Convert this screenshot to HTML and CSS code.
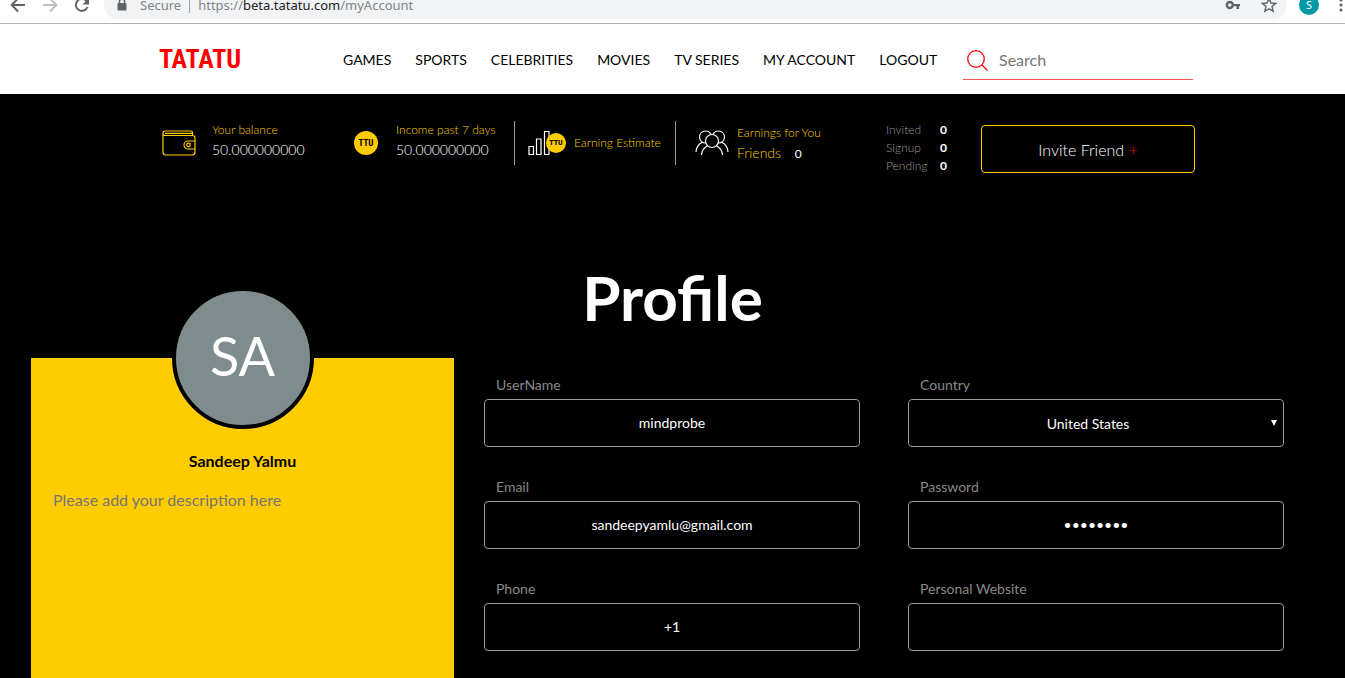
FILE: index.html
```html
<!DOCTYPE html>
<html lang="en">
<head>
<meta charset="utf-8">
<meta name="viewport" content="width=device-width, initial-scale=1">
<title>Profile</title>
<link rel="stylesheet" href="styles.css">
</head>
<body>
<div class="browser">
  <button class="tool" aria-label="Back"><svg width="16" height="16" viewBox="0 0 16 16"><path d="M15 8H2M8 1.500L1.700 8L8 14.500" fill="none" stroke="#5f6368" stroke-width="2"/></svg></button>
  <button class="tool" aria-label="Forward"><svg width="16" height="16" viewBox="0 0 16 16"><path d="M1 8H14M8 1.500L14.300 8L8 14.500" fill="none" stroke="#bdbdbd" stroke-width="2"/></svg></button>
  <button class="tool" aria-label="Reload"><svg width="16" height="16" viewBox="0 0 16 16"><path d="M13.500 10A6 6 0 1 1 12.500 4" fill="none" stroke="#5f6368" stroke-width="2"/><path d="M15 1V7.500H8.500Z" fill="#5f6368"/></svg></button>
  <div class="omnibox">
    <svg width="12" height="14" viewBox="0 0 12 14"><rect x="1.500" y="5" width="9" height="7.500" rx="1" fill="#5f6368"/><path d="M3.500 5V3.500a2.500 2.500 0 0 1 5 0V5" fill="none" stroke="#5f6368" stroke-width="1.500"/></svg>
    <span class="secure">Secure</span>
    <span class="divider"></span>
    <span class="url">https://<b>beta.tatatu.com</b>/myAccount</span>
    <svg class="key" width="16" height="10" viewBox="0 0 16 10"><circle cx="4.800" cy="5" r="3" fill="none" stroke="#5f6368" stroke-width="2.400"/><path d="M8 4H15V6.200H14V9H11.500V6.200H8Z" fill="#5f6368"/></svg>
    <svg width="16" height="16" viewBox="0 0 16 16"><path d="M8 1.500L9.900 6L14.700 6.400L11 9.500L12.200 14.200L8 11.700L3.800 14.200L5 9.500L1.300 6.400L6.100 6Z" fill="none" stroke="#5f6368" stroke-width="1.400"/></svg>
  </div>
  <span class="user">S</span>
  <button class="more" aria-label="Menu"><svg width="4" height="16" viewBox="0 0 4 16" fill="#5f6368"><circle cx="2" cy="3" r="1.600"/><circle cx="2" cy="8" r="1.600"/><circle cx="2" cy="13" r="1.600"/></svg></button>
</div>

<header class="header">
  <a class="logo" href="#">TATATU</a>
  <nav class="nav">
    <a href="#">GAMES</a><a href="#">SPORTS</a><a href="#">CELEBRITIES</a><a href="#">MOVIES</a><a href="#">TV SERIES</a><a href="#">MY ACCOUNT</a><a href="#">LOGOUT</a>
  </nav>
  <label class="search">
    <svg width="22" height="22" viewBox="0 0 22 22" fill="none" stroke="#f00" stroke-width="1.300"><circle cx="9" cy="10" r="8.300"/><path d="M15 16L20.500 21.500"/></svg>
    <input type="search" placeholder="Search" aria-label="Search">
  </label>
</header>

<main class="main">
  <section class="stats">
    <div class="stat balance">
      <svg width="34" height="26" viewBox="0 0 34 26" fill="none" stroke="#fc0" stroke-width="1.200"><path d="M30.500 5.500V3Q30.500 1 28.500 1H3Q1 1 1 3V22Q1 25 4 25H30Q33 25 33 22V8Q33 5.500 30.500 5.500H3Q1 5.500 1 3.500M3 3.300H30.500M33 11H26a4 4 0 0 0 0 8H33"/><circle cx="26.500" cy="15" r="1.800"/></svg>
      <div class="pair"><p class="cap">Your balance</p><p class="amount">50.000000000</p></div>
    </div>
    <div class="stat income">
      <span class="coin">TTU</span>
      <div class="pair"><p class="cap">Income past 7 days</p><p class="amount">50.000000000</p></div>
    </div>
    <div class="stat estimate">
      <span class="chart">
        <svg width="24" height="26" viewBox="0 0 24 26" fill="none" stroke="#fff" stroke-width="1.200"><path d="M1 16.500H5.500V24.500H1ZM8.500 9H13V24.500H8.500ZM16.500 1.500H21V24.500H16.500Z"/></svg>
        <span class="coin small">TTU</span>
      </span>
      <p class="cap">Earning Estimate</p>
    </div>
    <div class="stat friends">
      <svg width="34" height="26" viewBox="0 0 34 26" fill="none" stroke="#fff" stroke-width="1.200"><circle cx="17" cy="11" r="6.500"/><path d="M10.500 13A6 6 0 1 1 16 4.500M23.500 13A6 6 0 1 0 18 4.500M1 22Q1.500 15 7 12.500M33 22Q32.500 15 27 12.500M6.500 25Q7 18.500 12.500 16M27.500 25Q27 18.500 21.500 16"/></svg>
      <div><p class="cap">Earnings for You</p><p class="friend-line">Friends <span>0</span></p></div>
    </div>
    <dl class="counts">
      <dt>Invited</dt><dd>0</dd><dt>Signup</dt><dd>0</dd><dt>Pending</dt><dd>0</dd>
    </dl>
    <button class="invite">Invite Friend <span>+</span></button>
  </section>

  <h1 class="title">Profile</h1>

  <div class="profile">
    <aside class="card">
      <div class="avatar">SA</div>
      <h2 class="name">Sandeep Yalmu</h2>
      <textarea class="about" aria-label="Description" placeholder="Please add your description here"></textarea>
    </aside>
    <form class="fields">
      <div class="field"><label for="username">UserName</label><input id="username" type="text" value="mindprobe"></div>
      <div class="field"><label for="country">Country</label>
        <div class="select"><select id="country"><option>United States</option></select><svg width="8" height="8" viewBox="0 0 8 8"><path d="M1 1H7L4 7Z" fill="#fff"/></svg></div>
      </div>
      <div class="field"><label for="email">Email</label><input id="email" type="email" value="sandeepyamlu@gmail.com"></div>
      <div class="field"><label for="password">Password</label><input id="password" type="password" value="abcdefgh"></div>
      <div class="field"><label for="phone">Phone</label><input id="phone" type="tel" value="+1"></div>
      <div class="field"><label for="website">Personal Website</label><input id="website" type="url"></div>
    </form>
  </div>
</main>
</body>
</html>
```

FILE: styles.css
```css
* { box-sizing: border-box; }
body, h1, h2, p, dl, dd { margin: 0; }
body {
  min-height: 100vh;
  display: flex;
  flex-direction: column;
  background: #000;
  font-family: Lato, "Liberation Sans", sans-serif;
}
button, input, select, textarea { font: inherit; }
button { padding: 0; border: 0; background: none; }
a { color: inherit; text-decoration: none; }

/* Browser toolbar */
.browser {
  height: 24px;
  display: flex;
  align-items: flex-end;
  gap: 16px;
  padding: 0 2px 4px 10px;
  overflow: hidden;
  background: #fff;
  border-bottom: 1px solid #b4b4b4;
  font: 13px/10px "Noto Sans", sans-serif;
  color: #80868b;
}
.tool, .more { height: 28px; flex: none; display: flex; align-items: center; }
.omnibox {
  flex: 1;
  height: 28px;
  display: flex;
  align-items: center;
  padding: 0 10px 0 12px;
  margin-left: -2px;
  border-radius: 14px;
  background: #f1f3f4;
  white-space: nowrap;
}
.secure { margin-left: 12px; }
.divider { width: 1px; height: 16px; margin: 0 8px; background: #9aa0a6; }
.url { flex: 1; }
.url b { font-weight: 400; color: #202124; }
.key { margin-right: 20px; }
.user {
  width: 20px; height: 20px;
  flex: none;
  display: flex;
  align-items: center;
  justify-content: center;
  margin: 0 4px 4px -4px;
  border-radius: 50%;
  background: #0097a7;
  color: #fff;
  font-size: 11px;
}

/* Site header */
.header {
  display: flex;
  align-items: center;
  height: 70px;
  padding: 0 152px 0 159px;
  background: #fff;
  color: #000;
}
.logo {
  width: 184px;
  color: #f00;
  font: bold 26px/32px "Liberation Sans Narrow", "Roboto Condensed", Roboto, sans-serif;
}
.nav { display: flex; gap: 24px; flex: 1; font-size: 14px; white-space: nowrap; }
.search {
  width: 230px;
  height: 42px;
  display: flex;
  align-items: center;
  gap: 10px;
  padding: 2px 0 0 4px;
  border-bottom: 1px solid #f55;
}
.search svg { flex: none; }
.search input {
  width: 100%;
  min-width: 0;
  padding: 0;
  border: 0;
  outline: 0;
  background: none;
  font-size: 16px;
}
.search input::placeholder { color: #757575; }

/* Account summary */
.main { flex: 1; display: flex; flex-direction: column; color: #fff; }
.stats {
  display: grid;
  grid-template-columns: 192fr 160fr 162fr 210fr 95fr 214fr;
  align-items: start;
  padding: 27px 150px 0 162px;
  font-weight: 300;
  white-space: nowrap;
}
.stat { display: flex; align-items: center; height: 44px; }
.stat svg { flex: none; }
.pair { padding-bottom: 6px; }
.cap { color: #fc0; font-size: 12px; line-height: 20px; }
.amount { font-size: 14px; line-height: 20px; }
.balance { gap: 16px; }
.income { gap: 18px; }
.estimate { gap: 8px; padding-left: 13px; border: solid #999; border-width: 0 1px; }
.friends { gap: 8px; padding-left: 19px; }
.coin {
  width: 24px; height: 24px;
  flex: none;
  border-radius: 50%;
  background: #fc0;
  color: #000;
  font: bold 9px/24px "Liberation Sans Narrow", "Roboto Condensed", Roboto, sans-serif;
  text-align: center;
}
.chart { display: flex; align-items: center; }
.small { width: 20px; height: 20px; margin-left: -6px; font-size: 8px; line-height: 20px; position: relative; }
.friend-line { color: #fc0; font-size: 14px; line-height: 20px; }
.friend-line span { margin-left: 10px; font-size: 12px; color: #fff; font-weight: 400; }
.counts {
  display: grid;
  grid-template-columns: 54px 1fr;
  font-size: 12px;
  line-height: 18px;
  color: #999;
}
.counts dd { color: #fff; font-weight: 700; }
.invite {
  height: 48px;
  margin-top: 4px;
  border: 1px solid #fc0;
  border-radius: 4px;
  color: #fff;
  font-size: 16px;
  font-weight: 300;
}
.invite span { color: #f00; }

/* Profile */
.title { margin-top: 84px; font-size: 62px; line-height: 76px; text-align: center; }
.profile {
  flex: 1;
  display: grid;
  grid-template-columns: 423fr 800fr;
  gap: 30px;
  margin-top: 23px;
  padding: 0 61px 0 31px;
}
.card { display: flex; flex-direction: column; align-items: center; background: #fc0; color: #000; }
.avatar {
  width: 142px; height: 142px;
  margin-top: -71px;
  border: 4px solid #000;
  border-radius: 50%;
  background: #7f8c8d;
  color: #fff;
  font-size: 54px;
  line-height: 130px;
  text-align: center;
}
.name { margin-top: 22px; font-size: 16px; line-height: 20px; }
.about {
  width: 100%;
  flex: 1;
  margin-top: 19px;
  padding: 0 22px;
  border: 0;
  outline: 0;
  resize: none;
  background: none;
  font-size: 16px;
  line-height: 20px;
}
.about::placeholder { color: #757575; }
.fields { display: grid; grid-template-columns: 1fr 1fr; gap: 30px 48px; align-content: start; padding: 17px 0 27px; }
.field { display: flex; flex-direction: column; gap: 4px; }
.field label { padding-left: 12px; font-size: 14px; line-height: 20px; color: #888; }
.field input, .field select {
  width: 100%;
  height: 48px;
  padding: 0 12px 2px;
  border: 1px solid #999;
  border-radius: 4px;
  outline: 0;
  background: #000;
  color: #fff;
  font-size: 14px;
  text-align: center;
}
.select { position: relative; }
.field select { appearance: none; padding: 0 24px 0 8px; text-align-last: center; }
.select svg { position: absolute; right: 6px; top: 20px; pointer-events: none; }
```
